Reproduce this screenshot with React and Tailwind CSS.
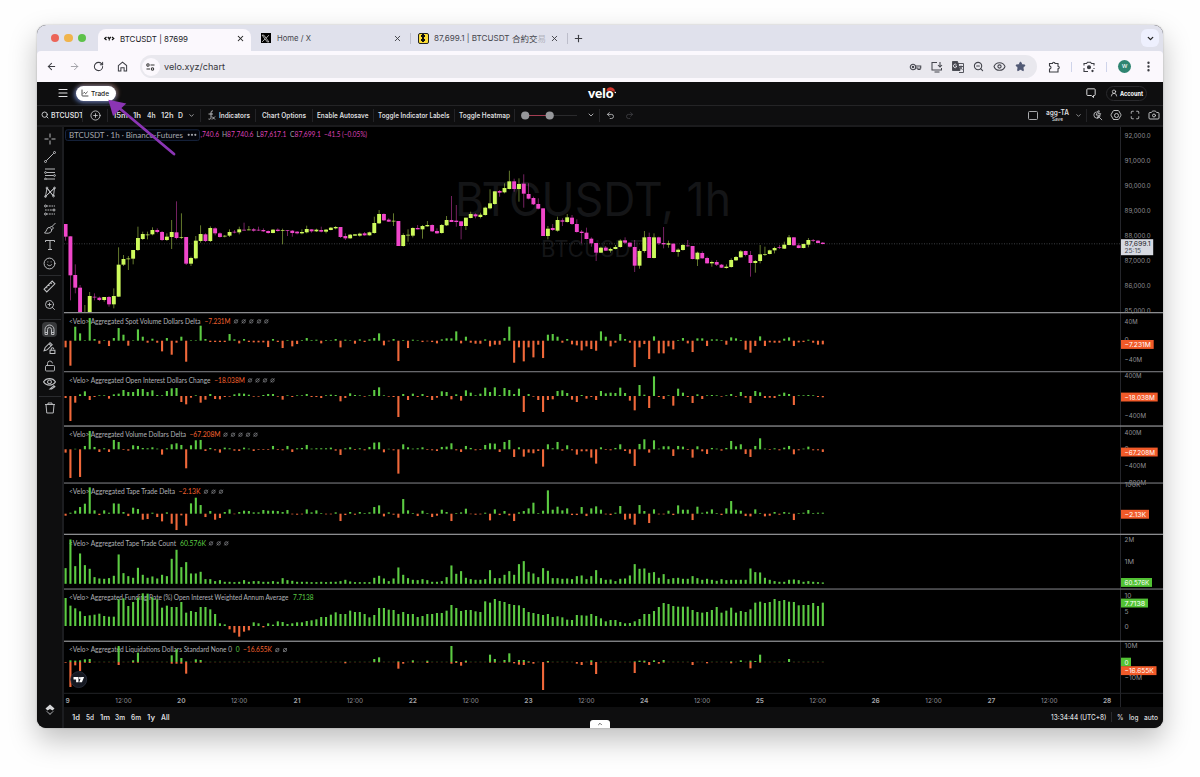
import {
  ArrowLeft, ArrowRight, RotateCw, X, Plus, ChevronDown, ChevronUp, Menu, ChartLine, Search, CirclePlus,
  Undo2, Redo2, UserRound, Maximize, Camera, ZoomIn, ZoomOut, LockOpen, Eye, Smile, Star, EllipsisVertical, Hexagon
} from 'lucide-react'

const STEP = 4.823
const FIRST = 65.6
const UP = '#cdfa5c'
const DOWN = '#f046ca'
const GREEN = '#5ccb43'
const ORANGE = '#f0683a'

// direction, body top, body bottom, wick top, wick bottom (thirds of a pixel)
const candles = `d222,260,222,272 d259,376,259,451 d375,413,343,430 d413,488,405,488 u490,500,465,490 u438,500,426,500 d440,443,430,451
d443,450,440,453 u441,450,441,455 d441,463,438,470 u438,463,415,475 u344,440,292,440 u327,344,315,348 u325,328,318,360 u300,326,300,343
u264,300,230,303 u252,267,245,270 u253,256,245,268 u240,253,232,256 d240,246,235,250 d246,270,243,273 u260,270,250,273 u246,261,210,297
d247,264,154,268 u261,264,190,267 d261,341,261,345 u324,341,320,348 u272,325,258,328 u252,273,226,278 d253,273,250,276 u234,273,229,276
d235,250,232,256 d250,261,247,263 u257,260,255,262 u246,257,238,261 d245,248,240,250 u238,247,230,253 d239,242,218,242 u238,241,228,241
d238,242,234,245 d239,242,230,243 d240,244,235,246 d243,249,241,251 u239,249,237,250 d239,243,235,245 u240,243,236,283 d240,243,240,258
d242,249,240,260 d245,250,243,253 u246,250,238,253 u237,247,227,250 d238,244,238,248 u239,244,236,246 d240,245,230,247 u239,245,237,250
u233,240,231,241 u231,235,228,238 d231,261,231,264 d258,265,250,270 u254,265,252,266 u253,257,252,258 u251,257,248,260
d250,256,246,257 u247,256,245,257 u219,249,200,251 u192,220,180,222 d192,211,190,213 d209,215,205,216 u212,215,190,228 d213,288,213,288
u255,288,250,290 u254,257,238,275 u234,257,232,262 d234,238,225,238 u228,238,225,266 u225,229,213,230 d225,244,223,246 d243,250,235,252
u225,249,222,251 u210,226,198,228 d210,216,138,216 d212,216,165,230 d214,228,214,268 u203,228,203,240 u192,204,185,205 d193,199,190,205
u194,201,188,205 u173,195,170,197 u160,175,118,178 u124,162,124,164 d123,128,120,140 u114,127,100,130 u94,117,62,118 d94,117,86,125
u102,117,85,155 d101,131,73,173 d132,146,100,148 d144,163,140,165 d162,176,145,178 d175,258,175,258 u236,258,228,268 d234,240,222,243
u210,242,200,245 d211,215,205,228 u202,216,192,218 d203,222,195,225 d222,246,208,248 d245,249,240,280 d248,267,233,268 d266,280,262,290
d279,308,279,333 u293,308,290,309 d293,302,288,303 u297,302,293,308 u291,297,285,298 u272,291,268,293 d271,278,262,282 d278,290,277,293
d291,347,270,366 u303,347,298,356 u262,303,243,308 d261,324,248,324 u262,324,250,325 d262,280,260,285 d279,283,231,295 u280,284,272,293
d281,306,280,307 u299,306,295,320 u285,300,282,302 d286,289,270,290 d288,327,288,328 u308,328,305,348 d309,325,304,326 d324,340,320,341
u336,340,332,350 d336,344,330,348 d344,353,342,354 u350,354,343,356 u330,351,325,353 u321,331,318,333 u304,322,300,323 d303,315,302,319
d315,339,303,380 u333,339,330,368 u313,333,285,340 u312,315,290,318 u301,312,299,313 u294,301,290,310 d291,294,285,297 u284,296,275,297
u262,285,255,286 d262,286,261,287 d286,294,280,295 u282,294,281,295 u270,284,264,292 d270,273,267,276 d272,279,270,280 d278,282,276,283`
  .split(/\s+/)
  .map((c) => ({ up: c[0] === 'u', v: c.slice(1).split(',').map((n) => 150 + n / 3) }))

const spot = [-20,-75,42,22,1,68,5,-9,1,-16,8,38,18,-15,1,34,12,-6,6,-6,-32,8,-42,-6,12,-63,1,1,45,5,-4,-4,-4,-4,20,4,-8,5,-4,-5,-5,-5,-19,5,-4,-22,2,-17,-10,2,8,2,3,-8,2,1,5,-20,3,1,-9,4,-4,4,8,22,-14,-2,5,-61,2,-22,3,1,-4,-2,-4,-8,4,7,7,28,-8,12,-6,-9,-9,4,-17,-12,-12,8,42,-66,-20,-62,-20,-50,-12,-52,18,20,12,-6,5,-11,-14,-29,-17,-25,-30,28,12,-17,-6,20,5,-6,-79,-20,-10,-55,13,-38,-38,-17,-26,2,8,-8,-34,7,7,-16,4,4,2,-12,10,7,2,-27,-36,-16,13,-16,-5,-6,-6,6,10,-16,-5,-4,3,-6,-12,-11]
const oi = [-6,-75,-20,5,14,-12,-3,2,2,-8,5,7,18,12,12,21,21,12,17,3,2,15,23,24,-18,-25,-5,2,-20,-11,6,-9,-10,-3,-2,5,8,7,4,-2,-2,3,6,6,-2,-11,2,-3,2,2,6,-3,-3,-6,2,4,3,-16,-6,8,3,2,-2,2,18,26,2,-2,-3,-63,6,-12,7,-3,6,-3,-12,-5,14,12,-10,5,-14,17,10,2,7,25,12,26,3,24,18,6,22,-48,6,-2,-12,-48,-12,-10,15,17,9,-11,-18,3,-8,-3,-12,15,8,10,9,25,9,-14,-43,33,4,-36,59,-3,-9,2,-29,22,10,-3,-21,5,-9,2,3,2,-2,2,6,-2,12,-5,-21,15,11,-6,-5,-6,4,10,6,-27,2,2,3,2,-3,-4]
const vol = [-10,-86,1,-83,10,55,7,-8,3,-8,28,22,-2,-4,12,10,4,3,6,2,-16,3,15,18,13,-57,12,27,28,-5,4,-3,-10,5,3,-4,-5,5,2,-5,-2,-2,-2,10,-2,-3,10,-8,3,4,13,2,3,3,3,5,-4,-17,3,6,-2,3,-3,7,20,21,-9,1,-3,-73,15,6,2,3,6,-2,-3,-5,7,8,18,-3,-8,10,4,-3,-2,13,18,17,-8,22,28,-23,6,-22,-10,-12,-5,-52,15,3,22,-4,12,-3,-16,-6,-6,-25,-43,6,-2,-3,4,15,-5,-13,-50,16,30,-10,27,2,9,9,-20,10,8,-2,-25,9,-6,-14,4,2,-4,4,25,9,15,-14,-23,10,33,2,-2,3,-3,5,10,-15,-3,2,8,-3,-3,-8]
const tape = [-6,3,9,20,30,79,10,-4,10,3,31,30,5,-7,18,14,-18,-16,3,-10,-23,4,-30,-49,-5,-36,31,48,26,-10,8,-18,-13,5,13,-1,5,9,8,4,4,11,9,9,8,5,11,-2,-3,-2,13,4,10,2,-2,-2,4,-22,-4,5,-3,5,2,4,20,25,-8,4,-3,-12,44,10,2,-7,9,2,-10,-6,12,5,-22,2,4,15,-1,-3,-2,3,-20,13,-4,8,-5,-22,4,8,16,33,2,9,70,12,21,10,16,-4,-4,20,-7,16,22,12,-2,-4,3,23,-18,-15,-33,26,8,-28,13,-2,-2,9,-4,25,12,12,-19,21,3,6,13,2,-4,16,38,12,9,-7,-8,13,2,-8,-6,5,-3,5,3,-19,2,3,11,2,3,3]
const count = [47,133,53,91,56,45,20,16,15,17,24,88,32,23,18,48,27,18,22,16,27,23,75,102,50,65,31,31,36,14,14,8,11,6,6,5,6,11,6,8,8,6,6,8,6,17,11,9,6,6,6,5,5,6,5,6,6,8,12,7,5,5,5,5,18,24,16,8,16,49,27,17,12,11,14,11,6,6,8,20,55,30,38,18,14,12,12,14,41,17,17,27,38,27,59,68,36,31,20,47,39,17,17,15,16,14,23,25,14,23,41,17,12,13,8,15,16,25,59,45,46,33,35,18,29,14,17,18,15,15,23,17,12,15,12,9,14,11,12,12,12,12,46,35,34,18,12,8,6,6,12,13,11,6,8,6,5,4]
const funding = [84,61,53,44,30,32,34,37,30,28,28,80,83,60,72,85,98,97,86,80,55,61,57,57,72,40,45,42,57,57,50,36,8,5,-10,-20,-32,-17,-13,11,8,-4,8,4,14,12,6,8,11,11,15,17,20,27,27,34,41,36,36,46,42,42,36,26,33,54,54,49,48,36,42,36,36,27,30,36,36,39,39,46,63,54,45,48,48,44,42,74,70,81,75,72,66,63,62,54,42,39,36,33,36,27,29,26,19,18,33,32,31,36,30,23,14,18,18,12,8,9,14,21,36,36,45,57,69,66,60,58,58,58,48,42,40,42,48,57,40,46,55,40,45,42,50,70,73,69,72,81,75,78,73,72,62,63,63,69,60,70]

// only the hours with visible liquidations: [up, down]
const liq = {
  0: [0, 2], 1: [5, 75], 2: [4, 10], 3: [5, 27], 4: [8, 2], 5: [9, 3], 11: [48, 9], 14: [5, 2], 15: [28, 2], 22: [20, 5], 23: [38, 5], 24: [12, 5],
  25: [2, 35], 27: [8, 2], 28: [6, 2], 58: [1, 4], 64: [9, 1], 65: [14, 1], 69: [2, 20], 70: [0, 5], 72: [5, 2], 75: [4, 3], 80: [48, 5],
  81: [3, 3], 82: [0, 11], 83: [4, 2], 88: [22, 2], 89: [9, 2], 91: [6, 2], 92: [26, 1], 93: [0, 4], 94: [6, 8], 95: [6, 9], 96: [2, 2],
  97: [0, 5], 99: [0, 84], 100: [3, 2], 106: [0, 5], 107: [0, 9], 109: [5, 9], 110: [0, 36], 118: [2, 33], 119: [4, 0], 120: [4, 2],
  121: [0, 9], 122: [5, 0], 123: [0, 5], 124: [6, 2], 130: [0, 9], 133: [0, 4], 138: [2, 4], 140: [5, 0], 142: [4, 19], 143: [3, 0],
  144: [22, 2], 150: [9, 0]
}

const panes = [
  { data: spot, zero: 340.7, label: 'Spot Volume Dollars Delta', w: 131.5, value: '−7.231M', vx: 204.5, vw: 26, y: 323.7, empty: [236, 243.7, 251.3, 259, 266.3] },
  { data: oi, zero: 396, label: 'Open Interest Dollars Change', w: 141.5, value: '−18.038M', vx: 214.3, vw: 30.5, y: 382.7, empty: [250, 257.5, 265, 272.5] },
  { data: vol, zero: 449.3, label: 'Volume Dollars Delta', w: 117, value: '−67.208M', vx: 189.5, vw: 31, y: 437, empty: [225.5, 233, 240.5, 248, 255.5] },
  { data: tape, zero: 513.7, label: 'Tape Trade Delta', w: 106, value: '−2.13K', vx: 178.5, vw: 22, y: 494, empty: [206, 213.5, 221] },
  { data: count, zero: 583.8, label: 'Tape Trade Count', w: 107, value: '60.576K', vx: 180, vw: 26, y: 545.7, empty: [211, 218.7, 226.3], green: true },
  { data: funding, zero: 626, label: 'Funding Rate (%) Open Interest Weighted Annum Average', w: 219.5, value: '7.7138', vx: 293, vw: 20.5, y: 599.7, empty: [], green: true },
  { data: [], zero: 662, label: 'Liquidations Dollars Standard None 0', w: 163, value: '−16.655K', vx: 243, vw: 29, y: 652.3, empty: [277.3, 285] }
]

const axis = [
  ['92,000.0', 135.3], ['91,000.0', 160.3], ['90,000.0', 185.3], ['89,000.0', 210.5], ['88,000.0', 235.7], ['87,000.0', 260.7],
  ['86,000.0', 285.9], ['85,000.0', 311], ['40M', 321.3, 13], ['0', 340], ['−40M', 360, 17.5], ['400M', 375.7, 17], ['−400M', 415.7, 21.500],
  ['400M', 432.3, 17], ['0', 449], ['−400M', 466, 21.500], ['−800M', 482.3, 21.500], ['100K', 485, 16], ['2M', 540, 9.500], ['1M', 562, 9.500], ['10', 595.7],
  ['5', 611.2], ['0', 626.2], ['10M', 646, 13], ['−10M', 678, 17.500]
]

const badges = [
  ['−7.231M', 340, 32.7, false], ['−18.038M', 392.6, 36.7, false], ['−67.208M', 447.6, 36.7, false], ['−2.13K', 509.8, 28, false],
  ['60.576K', 578, 31, true], ['7.7138', 598.6, 27, true], ['0', 657.7, 10, true], ['−16.655K', 666.2, 35.5, false]
]

const Txt = ({ x, y, w, size = 6.6, fill = '#909197', weight, anchor, family = 'Inter', children }) => (
  <text x={x} y={y} fill={fill} fontSize={size} fontWeight={weight} textAnchor={anchor} textLength={w} lengthAdjust="spacingAndGlyphs" fontFamily={`${family}, sans-serif`}>
    {children}
  </text>
)

const Bars = ({ data, zero }) =>
  data.map((v, i) => {
    const h = Math.max(Math.abs(v) / 3, 0.5)
    return <rect key={i} x={FIRST + i * STEP - 1.05} width="2.1" y={v > 0 ? zero - h : zero} height={h} fill={v > 0 ? GREEN : ORANGE} />
  })

const Chart = () => (
  <svg className="block w-[1099px] h-[580px] bg-black" viewBox="64 127 1099 580">
    <Txt x={455} y={216} w={276} size={46.5} fill="#141517">BTCUSDT, 1h</Txt>
    <Txt x={541} y={256.5} w={103} size={22.5} fill="#141517">BTCUSDT</Txt>
    <line x1="64" x2="1120" y1="243.8" y2="243.8" stroke="#4a4b50" strokeWidth="0.8" strokeDasharray="1 1.5" />

    <svg x="64" y="127" width="1056" height="185" viewBox="64 127 1056 185">
      {candles.map(({ up, v: [top, bottom, high, low] }, i) => {
        const x = FIRST + i * STEP
        const color = up ? UP : DOWN
        return (
          <g key={i} fill={color}>
            <rect x={x - 0.4} width="0.8" y={high} height={low - high} opacity="0.6" />
            <rect x={x - 1.95} width="3.9" y={top} height={bottom - top} opacity={bottom - top < 1.2 ? 0.7 : 1} />
          </g>
        )
      })}
    </svg>

    {panes.map((p) => (
      <g key={p.label}>
        <Txt x={69} y={p.y} w={p.w} size={6.7} fill="#b0b2b7" family="Lato">{`<Velo> Aggregated ${p.label}`}</Txt>
        <Txt x={p.vx} y={p.y} w={p.vw} size={6.6} fill={p.green ? GREEN : '#f5632f'} family="Lato">{p.value}</Txt>
        {p.empty.map((x) => (
          <g key={x} stroke="#9a9ca1" strokeWidth="0.6" fill="none">
            <circle cx={x} cy={p.y - 2.3} r="1.7" />
            <path d={`M${x - 2} ${p.y - 0.3}l4 -4`} />
          </g>
        ))}
        <Bars data={p.data} zero={p.zero} />
      </g>
    ))}
    <Txt x={235.8} y={652.3} size={6.6} fill={GREEN} family="Lato">0</Txt>
    {candles.map((_, i) => {
      const [up, down] = liq[i] || [1, 1]
      const x = FIRST + i * STEP - 1.05
      return (
        <g key={i} opacity={liq[i] ? 1 : 0.55}>
          <rect x={x} y={662 - up / 3} width="2.1" height={up / 3} fill={GREEN} />
          <rect x={x} y="662" width="2.1" height={down / 3} fill={ORANGE} />
        </g>
      )
    })}

    {/* price scale */}
    <line x1="1120.5" x2="1120.5" y1="127" y2="707" stroke="#24252a" />
    {axis.map(([t, y, w]) => (
      <Txt key={t + y} x={1124.6} y={y + 2.4} w={t.length === 8 ? 26 : w} size={6.6}>{t}</Txt>
    ))}
    {[312.6, 371.6, 426, 483, 534.3, 589, 641.2].map((y, i) => (
      <rect key={y} x="64" width="1099" y={y - 0.6} height="1.3" fill={i % 2 ? '#67686c' : '#8b8c8f'} />
    ))}
    <rect x="1121" y="239.2" width="32.2" height="16" fill="#d6d9e1" />
    <Txt x={1124.6} y={245.8} w={26} size={6.6} fill="#202127">87,699.1</Txt>
    <Txt x={1124.6} y={252.6} w={16.5} size={6.4} fill="#4b4d55">25:15</Txt>
    {badges.map(([t, y, w, green]) => (
      <g key={t}>
        <rect x="1121" y={y} width={w} height="8.9" fill={green ? '#52c234' : '#f15a29'} />
        <Txt x={1124.6} y={y + 6.9} w={w > 12 ? w - 6.4 : undefined} size={6.4} fill="#fff">{t}</Txt>
      </g>
    ))}

    {/* time scale */}
    <line x1="64" x2="1163" y1="693.3" y2="693.3" stroke="#222327" />
    <Txt x={67.5} y={703.2} anchor="middle" weight={600} fill="#a6a7ab">9</Txt>
    {Array.from({ length: 9 }, (_, i) => (
      <g key={i}>
        <Txt x={123.5 + i * 115.72} y={703.2} w={16.4} anchor="middle">12:00</Txt>
        <Txt x={181.3 + i * 115.72} y={703.2} anchor="middle" weight={600} fill="#a6a7ab">{20 + i}</Txt>
      </g>
    ))}

    {/* symbol legend */}
    <rect x="65.5" y="129.8" width="134" height="10.6" rx="2" fill="#04060c" stroke="#17243f" />
    <Txt x={69} y={137.6} w={114} size={7.8} fill="#a6a9af" family="Lato">BTCUSDT · 1h · Binance-Futures</Txt>
    <g fill="#a5a7ad">
      <circle cx="188.7" cy="134.8" r="1.1" /><circle cx="192" cy="134.8" r="1.1" /><circle cx="195.3" cy="134.8" r="1.1" />
    </g>
    {[[',740.6', '', 200.500, 18.500], ['87,740.6', 'H', 222, 31.5], ['87,617.1', 'L', 256.5, 30], ['87,699.1', 'C', 290, 31], ['−41.5 (−0.05%)', '', 324, 43]].map(([t, k, x, w]) => (
      <text key={x} x={x} y="137.2" fontSize="6.6" fontFamily="Lato, sans-serif" textLength={w} lengthAdjust="spacingAndGlyphs" fill="#dc40b6">
        <tspan fill="#a0a2a8">{k}</tspan>{t}
      </text>
    ))}

    <circle cx="78.7" cy="679.6" r="8" fill="#161922" stroke="#2e3442" strokeWidth="0.7" />
    <path d="M73.5 677h5v5.2h-2.4v-2.8h-2.6zM81.3 677h2.8l-2.2 5.2h-2.7z" fill="#fff" />
    <circle cx="80" cy="678.1" r="1.1" fill="#fff" />
  </svg>
)

const Sep = () => <div className="w-px h-[13px] bg-[#232326] shrink-0" />

const tools = [
  <g><path d="M12 1v8M12 15v8M1 12h8M15 12h8" /></g>,
  <g><circle cx="3" cy="21" r="2" /><circle cx="21" cy="3" r="2" /><path d="M4.500 19.500l15-15" /></g>,
  <g><path d="M2 2h20M5 9h17M2 15h17M5 22h17" /><circle cx="3" cy="9" r="1.800" /><circle cx="3" cy="22" r="1.800" /><circle cx="21" cy="15" r="1.800" /></g>,
  <g><path d="M3 21L6 4l13 16 2-16L3 21M6 4l6 8 9-8M3 21l9-9 7 8" /><circle cx="3" cy="21" r="1.800" /><circle cx="6" cy="4" r="1.800" /><circle cx="21" cy="4" r="1.800" /><circle cx="19" cy="20" r="1.800" /></g>,
  <g><path d="M5 4h17M2 12h16M5 20h17" strokeDasharray="3.500 1.500" /><circle cx="3" cy="4" r="2" /><circle cx="3" cy="20" r="2" /><circle cx="20" cy="12" r="2" /></g>,
  <g><path d="M1 22c6 1 12 1 14-4 1-3-1-7-5-7-5 0-3 6-9 11M12 11l3-3 4 4-4 4M16 9l7-7" /></g>,
  <g><path d="M3 6V3h18v3M12 3v18M8 21h8" /></g>
]

const Tool = ({ children }) => (
  <div className="flex items-center justify-center w-[15px] h-[17.750px] shrink-0">{children}</div>
)

const Glyph = ({ children, className = 'w-[12px] h-[12px]', width = 1.9 }) => (
  <svg className={`shrink-0 ${className}`} viewBox="0 0 24 24" fill="none" stroke="currentColor" strokeWidth={width}>{children}</svg>
)

const Sidebar = () => (
  <div className="w-[27px] shrink-0 border-r-2 border-[#1c1d20] bg-[#0e0e0f] text-[#c0c1c4] flex flex-col items-center pt-[3px]">
    {tools.map((t, i) => (
      <Tool key={i}><Glyph>{t}</Glyph></Tool>
    ))}
    <Tool><Smile size={13} strokeWidth={1.8} /></Tool>
    <div className="w-[22px] h-px bg-[#2a2b2e] mt-[3px] mb-[2px] shrink-0" />
    <Tool>
      <Glyph className="w-[13px] h-[13px]"><path d="M2 17L17 2l5 5L7 22zM6 13l2 2M10 9l2 2M14 5l2 2" /></Glyph>
    </Tool>
    <Tool><ZoomIn size={12} strokeWidth={1.8} /></Tool>
    <div className="w-[22px] h-px bg-[#2a2b2e] mt-[5.500px] mb-[2px] shrink-0" />
    <div className="w-[15px] h-[15px] rounded-sm bg-[#38393b] flex items-center justify-center shrink-0">
      <svg className="w-[11px] h-[12px]" viewBox="0 0 22 24" fill="none" stroke="currentColor" strokeWidth="1.9">
        <path d="M2 21V11a9 9 0 0118 0v10h-5V11a4 4 0 00-8 0v10zM2 17h5M15 17h5" />
      </svg>
    </div>
    <div className="h-[2px] shrink-0" />
    <Tool>
      <Glyph className="w-[13px] h-[13px]"><path d="M2 18l2-6L13 3l4 4-9 9zM11 5l4 4M2 18l6-2M13 17h9v6h-9zM15 17v-2a2.500 2.500 0 015 0" /></Glyph>
    </Tool>
    <Tool><LockOpen size={12} strokeWidth={1.8} /></Tool>
    <Tool>
      <Glyph className="w-[13px] h-[13px]"><path d="M1 9c5-8 17-8 22 0-5 8-17 8-22 0z" /><circle cx="12" cy="9" r="3.500" /><path d="M13 22l7-6 2 2-6 4z" /></Glyph>
    </Tool>
    <div className="w-[22px] h-px bg-[#2a2b2e] mt-[4px] mb-[2px] shrink-0" />
    <Tool>
      <Glyph><path d="M2 5h20M8 5V2h8v3M4 5l1.500 17h13L20 5" /></Glyph>
    </Tool>
    <svg className="w-[10px] h-[12px] mt-auto mb-[12px]" viewBox="0 0 20 24">
      <path d="M10 1l9 8-4 4-5-3-5 3-4-4z" fill="#d5d6d8" />
      <path d="M1 13l9 9 9-9-4 2-5 4-5-4z" fill="#8e8f92" />
    </svg>
  </div>
)

const Label = ({ w, children, size = 7, weight = 600, fill = '#dcdddf', family = 'Inter' }) => (
  <svg className="shrink-0 overflow-visible" style={{ width: w, height: 10 }}>
    <text x="0" y="7.6" fontFamily={`${family}, sans-serif`} fontSize={size} fontWeight={weight} fill={fill} textLength={w} lengthAdjust="spacingAndGlyphs">{children}</text>
  </svg>
)

const ChromeBar = () => (
  <div className="h-[57px] bg-[#e0e1ec] flex flex-col text-[#3b3c42]">
    <div className="h-[26px] flex items-center">
      <div className="flex gap-[5px] ml-[13.500px]">
        <div className="w-[8.5px] h-[8.5px] rounded-full bg-[#ec6559]" />
        <div className="w-[8.5px] h-[8.5px] rounded-full bg-[#f0b44c]" />
        <div className="w-[8.5px] h-[8.5px] rounded-full bg-[#5dc24a]" />
      </div>
      <div className="ml-[12px] mt-[4px] w-[153px] h-[22px] rounded-t-[8px] bg-[#fbf8fd] flex items-center px-[6px]">
        <svg className="w-[10.500px] h-[5px] mb-[4px]" viewBox="0 0 21 10" fill="none" stroke="#111" strokeWidth="2.400"><path d="M5 2L1.500 5 5 8M16 2l3.500 3L16 8M7.500 2l3 3.500 3-3.500M10.500 5v4" /></svg>
        <div className="ml-[5.500px] mb-[3px] flex"><Label w={68} size={8.2} weight={400} fill="#202124">BTCUSDT | 87699</Label></div>
        <X className="ml-auto mr-[0px] mb-[3px] text-[#222]" size={9} strokeWidth={2.8} />
      </div>
      <div className="ml-[9.500px] w-[10px] h-[10px] bg-black flex items-center justify-center">
        <svg className="w-[9px] h-[9px]" viewBox="0 0 16 16" fill="none" stroke="#ddd"><path d="M2 2h3l9 12h-3zM14 2L9 7.500M7 9l-5 5" strokeWidth="1.400" /></svg>
      </div>
      <div className="ml-[6px] flex"><Label w={34} size={8.2} weight={400} fill="#45464d">Home / X</Label></div>
      <X className="ml-[82.500px]" size={9} strokeWidth={2.400} />
      <div className="ml-[8px] w-px h-[11px] bg-[#bdbecb]" />
      <div className="ml-[6.500px] w-[11px] h-[11px] rounded-[2px] bg-[#fbdc33] border border-[#222] flex items-center justify-center">
        <svg className="w-[6px] h-[8px]" viewBox="0 0 6 8" fill="#111"><path d="M2 0h2v8H2zM1 1h4v2H1zM1 5h4v2H1z" /></svg>
      </div>
      <div className="ml-[5px] w-[109px] h-[12px] flex items-center text-[#45464d]">
        <Label w={75.500} size={8.2} weight={400} fill="#45464d">87,699.1 | BTCUSDT</Label>
        <span className="ml-[3px] text-[8.5px] leading-none font-['Noto_Sans_CJK_TC',sans-serif] whitespace-nowrap">合約交<span className="opacity-30">易</span></span>
      </div>
      <X className="ml-[7px]" size={9} strokeWidth={2.400} />
      <div className="ml-[8px] w-px h-[11px] bg-[#bdbecb]" />
      <Plus className="ml-[5px]" size={11} strokeWidth={2.400} />
      <div className="ml-auto mr-[4px] w-[18px] h-[18px] rounded-[6px] bg-[#eef0fe] flex items-center justify-center"><ChevronDown size={9} strokeWidth={3.400} className="text-[#222]" /></div>
    </div>
    <div className="h-[31px] bg-[#fbf8fd] rounded-t-[4px] flex items-center">
      <ArrowLeft className="ml-[9px]" size={11} strokeWidth={2.200} />
      <ArrowRight className="ml-[12px] text-[#9c9da3]" size={11} strokeWidth={2} />
      <RotateCw className="ml-[13px]" size={11} strokeWidth={2.200} />
      <Glyph className="w-[11px] h-[11px] ml-[12.500px]" width={2.200}><path d="M3 10l9-7.500L21 10v12h-5.500v-7.500h-7V22H3z" /></Glyph>
      <div className="ml-[12px] w-[897px] h-[22.500px] rounded-full bg-[#e9e8ee] flex items-center">
        <div className="ml-[2px] w-[18px] h-[18px] rounded-full bg-[#fbf8fd] flex items-center justify-center">
          <svg className="w-[9px] h-[8px]" viewBox="0 0 18 16" fill="none" stroke="#333" strokeWidth="2.100"><circle cx="4" cy="4" r="2.400" /><path d="M9 4h8M1 12h7" /><circle cx="13" cy="12" r="2.400" /></svg>
        </div>
        <div className="ml-[4px] flex"><Label w={61} size={9} weight={400} fill="#34353a">velo.xyz/chart</Label></div>
        <div className="ml-auto mr-[11px] flex items-center gap-[9px] text-[#44454d]">
          <Glyph className="w-[13px] h-[12px]" width={2.100}><circle cx="7" cy="12" r="5.500" /><circle cx="7" cy="12" r="1.500" /><path d="M12 10h10.500v4H21v3h-4v-3h-5" /></Glyph>
          <Glyph className="w-[12px] h-[12px]" width={2.100}><path d="M12 3H2v15h19v-4M7 22h10M18 2v9M14 8l4 4 4-4" /></Glyph>
          <Glyph className="w-[12px] h-[12px]" width={1.800}><path d="M1 1h10l5 18H1z" fill="currentColor" /><path d="M12 5h11v18h-9M14 11h8M18 9v2M20 11c-1 3-3 5-5 6M16 12c1 2 3 4 5 5" /><path d="M9 7.500A3.500 3.500 0 109 12V10H6.500" stroke="#e9e8ee" /></Glyph>
          <ZoomOut size={11} strokeWidth={2.400} />
          <Eye size={13} strokeWidth={2} />
          <Star size={11} className="fill-[#525a75] text-[#525a75]" />
        </div>
      </div>
      <Glyph className="w-[12px] h-[12px] ml-[11px]" width={2.200}><path d="M3 5h6a2.500 2.500 0 015 0h6v5.500a2.500 2.500 0 010 5V22H3v-6a3 3 0 000-6z" /></Glyph>
      <div className="ml-[11px] w-px h-[10px] bg-[#cfd4ea]" />
      <Glyph className="w-[12px] h-[12px] ml-[11.500px]" width={2.200}><path d="M2 9V5h5l2-2.500h6L17 5h5v4M2 14v7h8M22 14v2" /><circle cx="12" cy="12.500" r="3" fill="currentColor" /><circle cx="19" cy="20" r="1.200" fill="currentColor" /></Glyph>
      <div className="ml-[11px] w-px h-[10px] bg-[#cfd4ea]" />
      <div className="ml-[11px] w-[13px] h-[13px] rounded-full bg-[#2f8571] text-white text-[7px] leading-[12px] text-center font-[Inter,sans-serif]">w</div>
      <EllipsisVertical className="ml-[11px]" size={13} strokeWidth={2.400} />
    </div>
  </div>
)

const AppHeader = () => (
  <div className="h-[23.500px] bg-[#0e0e0f] border-b border-[#242426] flex items-center text-[#e2e2e4] shrink-0">
    <Menu className="ml-[19.500px]" size={12} strokeWidth={2.200} />
    <div className="ml-[7.500px] w-[40px] h-[15px] rounded-full bg-white shadow-[-1px_1px_4px_1px_#6f9bff88,1px_-1px_4px_1px_#ffb07a66] flex items-center pl-[4.500px]">
      <ChartLine size={8} strokeWidth={2.400} className="text-[#222]" />
      <div className="ml-[2px] flex"><Label w={18} size={6.8} weight={500} fill="#222">Trade</Label></div>
    </div>
    <div className="ml-[472px] flex">
      <svg className="w-[30px] h-[14px] overflow-visible" viewBox="0 0 30 14">
        <text x="0" y="11.800" fontFamily="Lato, sans-serif" fontWeight="900" fontSize="13" fill="#fff" textLength="25.500" lengthAdjust="spacingAndGlyphs">velo</text>
        <path d="M18.500 4.500c.5-3.500 5.500-4.500 8-1l.500 2.500-4-1.500-3 .8z" fill="#d0352d" />
        <circle cx="27.300" cy="6.500" r="0.800" fill="#fff" />
      </svg>
    </div>
    <Glyph className="w-[10px] h-[10px] ml-auto mr-[10px]" width={2.300}><path d="M4 2h16a2 2 0 012 2v12a2 2 0 01-2 2h-2v5l-5-5H4a2 2 0 01-2-2V4a2 2 0 012-2z" /></Glyph>
    <div className="mr-[16px] w-[41px] h-[15px] rounded-full border border-[#29292c] flex items-center pl-[2.500px]">
      <UserRound size={8} strokeWidth={2.200} />
      <div className="ml-[2px] flex"><Label w={23} size={6.7} weight={700} fill="#fff">Account</Label></div>
    </div>
  </div>
)

const Cell = ({ w, children, className = '' }) => (
  <div className={`flex items-center shrink-0 ${className}`} style={{ width: w }}>{children}</div>
)

const Toolbar = () => (
  <div className="h-[21.500px] bg-[#0e0e0f] border-b-2 border-[#1b1b1d] flex items-center text-[#d0d1d3] pl-[4px] shrink-0">
    <Cell w={45.500}>
      <Search size={8} strokeWidth={2.800} />
      <div className="ml-[1.500px] flex w-[31px] overflow-hidden"><Label w={32.500} size={7.2}>BTCUSDT</Label></div>
      <Sep />
    </Cell>
    <Cell w={20} className="pl-[3px]"><CirclePlus size={11} strokeWidth={1.800} /></Cell>
    <Cell w={6}><Sep /></Cell>
    <Cell w={20.500}><Label w={15}>15m</Label></Cell>
    <Cell w={13.500}><Label w={8}>1h</Label></Cell>
    <Cell w={14}><Label w={8.500}>4h</Label></Cell>
    <Cell w={17.500}><Label w={12.500}>12h</Label></Cell>
    <Cell w={10}><Label w={5}>D</Label></Cell>
    <Cell w={12}><ChevronDown size={7} strokeWidth={2.400} /></Cell>
    <Sep />
    <Cell w={54} className="pl-[6px]">
      <svg className="w-[9px] h-[10px]" viewBox="0 0 18 20" fill="none" stroke="currentColor" strokeWidth="1.700"><path d="M12 2c-3-1-4 1-4 4v9c0 3-2 4-5 3M3 8h9M10 13l6 6M16 13l-6 6" /></svg>
      <div className="ml-[3px] flex"><Label w={31}>Indicators</Label></div>
    </Cell>
    <Sep />
    <Cell w={56} className="pl-[5.500px]"><Label w={44}>Chart Options</Label></Cell>
    <Sep />
    <Cell w={59.500} className="pl-[4px]"><Label w={51.500}>Enable Autosave</Label></Cell>
    <Sep />
    <Cell w={80} className="pl-[4.500px]"><Label w={71.500}>Toggle Indicator Labels</Label></Cell>
    <Sep />
    <Cell w={59.500} className="pl-[4px]"><Label w={51}>Toggle Heatmap</Label></Cell>
    <Sep />
    <Cell w={83.500} className="pl-[6px]">
      <svg className="w-[57px] h-[9px]" viewBox="0 0 57 9">
        <path d="M4 4.500h52" stroke="#2a2a2c" strokeWidth="1" />
        <path d="M8 4.500h21" stroke="#a43d52" strokeWidth="1.200" />
        <circle cx="4.200" cy="4.500" r="4.100" fill="#96979a" /><circle cx="28.700" cy="4.500" r="4.100" fill="#96979a" />
      </svg>
      <ChevronDown className="ml-[8.500px]" size={8} strokeWidth={2.400} />
    </Cell>
    <Sep />
    <Undo2 className="ml-[6.500px]" size={9} strokeWidth={2} />
    <Redo2 className="ml-[9.500px] text-[#45464a]" size={9} strokeWidth={2} />
    <div className="ml-auto flex items-center pr-[3.500px]">
      <div className="w-[10px] h-[8.500px] rounded-[1.500px] border border-[#a9aaad]" />
      <div className="ml-[8px] w-[24px] flex flex-col items-center">
        <div className="h-[6px] flex items-center"><Label w={23}>agg-TA</Label></div>
        <div className="h-[6px] flex items-center"><Label w={11} size={5} weight={500}>Save</Label></div>
      </div>
      <ChevronDown className="ml-[5.500px] mr-[3.500px]" size={7} strokeWidth={2.200} />
      <Sep />
      <svg className="ml-[5px] w-[11px] h-[11px]" viewBox="0 0 24 24" fill="none" stroke="currentColor" strokeWidth="1.800"><path d="M10 4a7 7 0 108 8M16 16l6 6M13 2l-4 9h5l-2 7 7-10h-5l2-6z" /></svg>
      <div className="ml-[7.500px] relative flex items-center justify-center">
        <Hexagon size={12} strokeWidth={1.800} className="rotate-90" />
        <div className="absolute w-[5px] h-[5px] rounded-full border border-[#c0c1c3]" />
      </div>
      <Maximize className="ml-[8px]" size={10} strokeWidth={2} />
      <Camera className="ml-[7.500px]" size={12} strokeWidth={1.800} />
    </div>
  </div>
)

const ranges = [['1d', 8, 14], ['5d', 8, 14], ['1m', 10, 15.800], ['3m', 10, 15.800], ['6m', 10, 16], ['1y', 8, 13.500], ['All', 8.500, 10]]

const BottomBar = () => (
  <div className="h-[21px] bg-[#0e0e0f] flex items-center pl-[7.500px] pr-[5px] pb-[1px]">
    {ranges.map(([t, w, cell]) => (
      <Cell key={t} w={cell}><Label w={w}>{t}</Label></Cell>
    ))}
    <div className="ml-auto flex items-center">
      <Label w={55.500} weight={500}>13:34:44 (UTC+8)</Label>
      <div className="w-px h-[10px] bg-[#2a2a2d] mx-[4.500px]" />
      <Label w={6.500} weight={500}>%</Label>
      <div className="ml-[6px] flex"><Label w={9.500} weight={500}>log</Label></div>
      <div className="ml-[5.500px] flex"><Label w={14} weight={500}>auto</Label></div>
    </div>
  </div>
)

const App = () => (
  <div className="relative w-[1200px] h-[777px] bg-[#fefefe] pt-[25px] pl-[37px] overflow-hidden">
    <div className="w-[1126px] h-[703px] rounded-[9px] shadow-[0_12px_28px_rgba(0,0,0,0.25),0_0_2px_rgba(0,0,0,0.25)]">
      <div className="w-full h-full rounded-[9px] overflow-hidden flex flex-col bg-[#0e0e0f]">
        <ChromeBar />
        <AppHeader />
        <Toolbar />
        <div className="flex flex-1 min-h-0">
          <Sidebar />
          <div className="flex-1 min-w-0">
            <Chart />
            <BottomBar />
          </div>
        </div>
      </div>
    </div>
    <div className="absolute left-[590px] top-[720px] w-[20px] h-[8px] rounded-t-[3px] bg-white flex items-center justify-center"><ChevronUp size={6} strokeWidth={3} className="text-[#333]" /></div>
    <svg className="absolute left-[100px] top-[92px] w-[80px] h-[66px]" viewBox="100 92 80 66">
      <path d="M118 107L174 154" stroke="#8b35b4" strokeWidth="2.800" strokeLinecap="round" />
      <path d="M108.300 99.800L126.300 103.500 113 116z" fill="#8b35b4" />
    </svg>
  </div>
)

export default App
